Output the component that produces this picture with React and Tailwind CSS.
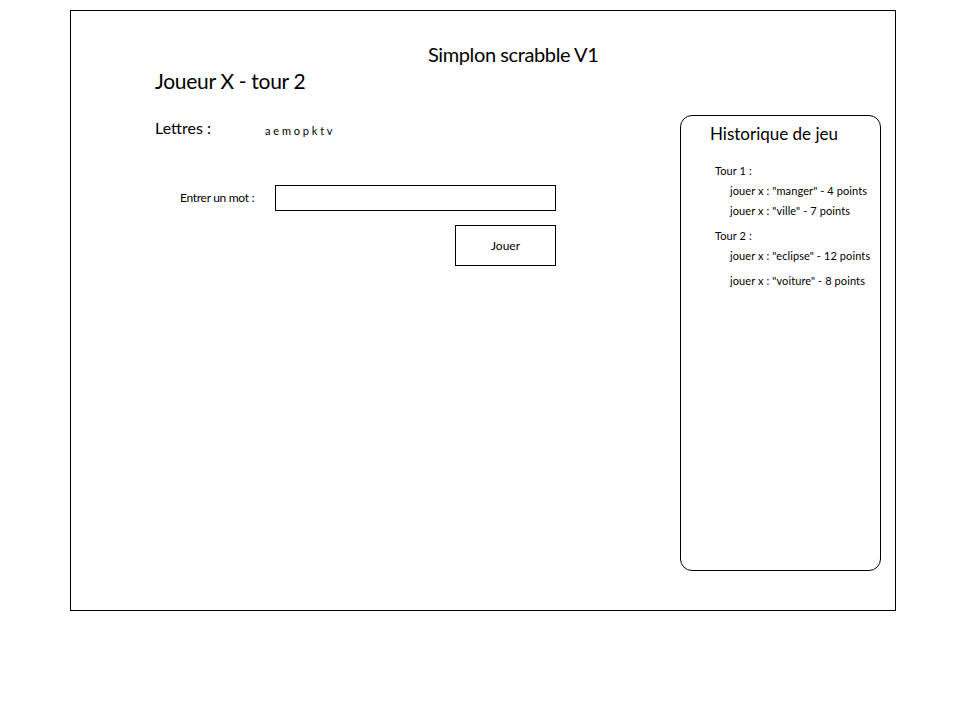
export default function App() {
  const f = { fontFamily: '"Source Sans Pro", Lato, "Liberation Sans", sans-serif' };
  return (
    <div className="w-[971px] h-[720px] bg-white text-black pl-[70px] pt-[10px]" style={f}>
      <div className="w-[826px] h-[601px] border border-black flex flex-col">
        <div className="pl-[357px] pt-[32px] text-[20px] leading-[22px] tracking-[-0.4px] whitespace-nowrap">Simplon scrabble V1</div>
        <div className="flex">
          <div className="w-[609px] pl-[84px] pt-[3px] flex flex-col">
            <div className="text-[21px] leading-[26px] tracking-[-0.3px] whitespace-nowrap">Joueur X - tour 2</div>
            <div className="mt-[24px] flex items-baseline h-[20px]">
              <div className="w-[110px] text-[16px] leading-[20px]">Lettres :</div>
              <div className="text-[11px] leading-[20px] translate-y-[1px]">a e m o p k t v</div>
            </div>
            <div className="mt-[47px] flex items-center">
              <div className="w-[120px] pl-[25px] text-[12px] leading-[16px] tracking-[-0.3px] whitespace-nowrap">Entrer un mot :</div>
              <input className="w-[281px] h-[26px] border border-black outline-none" />
            </div>
            <button className="mt-[14px] ml-[300px] w-[101px] h-[41px] border border-black text-[12px] flex items-center justify-center">Jouer</button>
          </div>
          <div className="mt-[50px] w-[201px] h-[456px] border border-black rounded-[12px] pl-[29px] pt-[8px]">
            <div className="text-[17px] leading-[20px] whitespace-nowrap">Historique de jeu</div>
            <div className="mt-[17px] text-[11px] leading-[20px] tracking-[0.1px] whitespace-nowrap">
              <div className="pl-[5px]">Tour 1 :</div>
              <div className="pl-[20px]">jouer x : "manger" - 4 points</div>
              <div className="pl-[20px]">jouer x : "ville" - 7 points</div>
              <div className="pl-[5px] mt-[5px]">Tour 2 :</div>
              <div className="pl-[20px]">jouer x : "eclipse" - 12 points</div>
              <div className="pl-[20px] mt-[5px]">jouer x : "voiture" - 8 points</div>
            </div>
          </div>
        </div>
      </div>
    </div>
  );
}
